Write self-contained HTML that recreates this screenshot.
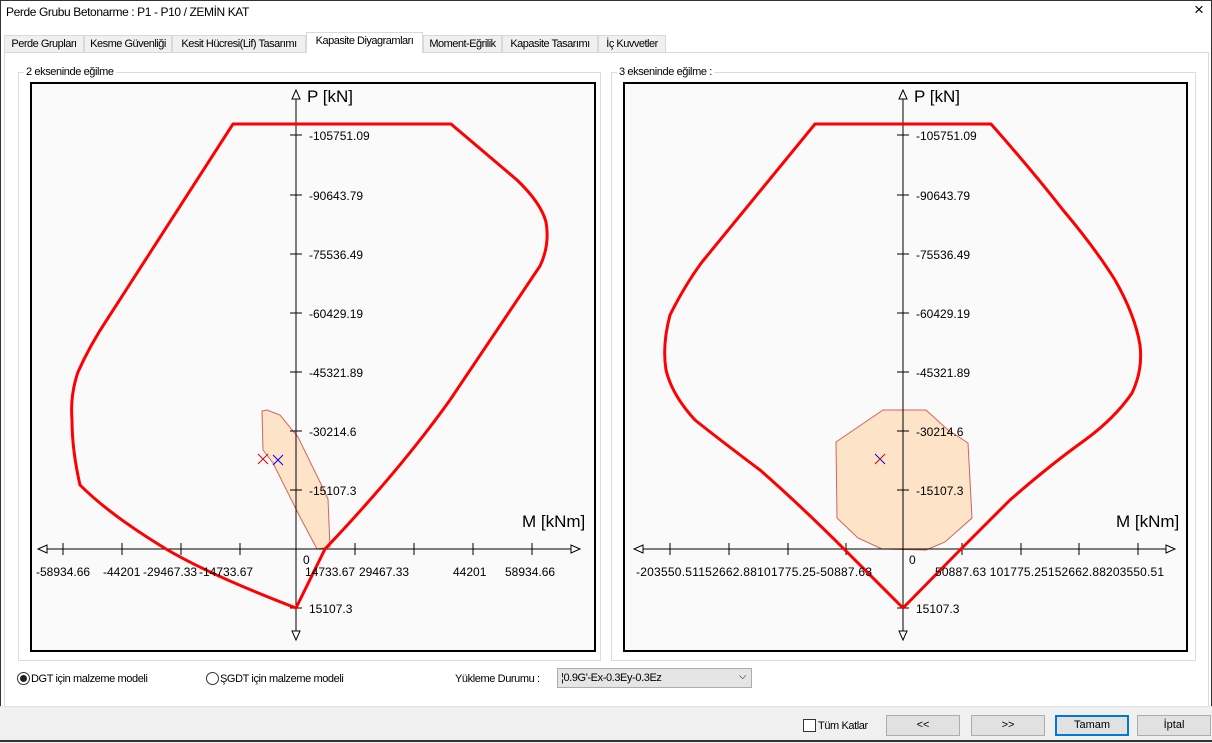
<!DOCTYPE html>
<html><head><meta charset="utf-8"><style>
body{margin:0;width:1212px;height:742px;background:#f0f0f0;font-family:"Liberation Sans",sans-serif;font-size:11px;color:#000;position:relative;overflow:hidden}
.a{position:absolute}
.n{letter-spacing:-0.4px}
.tab{position:absolute;top:35px;height:17px;border:1px solid #d9d9d9;border-bottom:none;background:#f0f0f0;font-size:11px;letter-spacing:-0.5px;line-height:17px;text-align:center;box-sizing:border-box;white-space:nowrap;overflow:hidden}
.btn{position:absolute;top:715px;height:21px;border:1px solid #adadad;background:#e1e1e1;box-sizing:border-box;text-align:center;line-height:19px;font-size:11px}
</style></head><body>
<div class="a" style="left:0;top:0;width:1210px;height:740px;border:1px solid #333;background:#fff"></div>
<div class="a n" style="left:6px;top:5px;font-size:12px">Perde Grubu Betonarme :  P1 - P10 / ZEMİN KAT</div>
<div class="a" style="left:1194px;top:0px;font-size:17px">×</div>
<div class="a" style="left:1px;top:24px;width:1210px;height:680px;background:#fff"></div>
<div class="a" style="left:4px;top:52px;width:1203px;height:653px;border:1px solid #d9d9d9;background:#fff"></div>
<div class="tab" style="left:4px;width:80px">Perde Grupları</div>
<div class="tab" style="left:84px;width:88px">Kesme Güvenliği</div>
<div class="tab" style="left:172px;width:134px">Kesit Hücresi(Lif) Tasarımı</div>
<div class="tab" style="left:306px;top:32px;height:21px;width:117px;background:#fff;border-color:#d9d9d9">Kapasite Diyagramları</div>
<div class="tab" style="left:423px;width:79px">Moment-Eğrilik</div>
<div class="tab" style="left:502px;width:96px">Kapasite Tasarımı</div>
<div class="tab" style="left:598px;width:68px">İç Kuvvetler</div>
<div class="a" style="left:18px;top:72px;width:581px;height:587px;border:1px solid #dcdcdc"></div>
<div class="a n" style="left:24px;top:66px;background:#fff;padding:0 2px">2 ekseninde eğilme</div>
<div class="a" style="left:611px;top:72px;width:583px;height:587px;border:1px solid #dcdcdc"></div>
<div class="a n" style="left:617px;top:66px;background:#fff;padding:0 2px">3 ekseninde eğilme :</div>
<svg class="a" style="left:0;top:0" width="1212" height="742" font-family="Liberation Sans, sans-serif">
<rect x="31" y="83" width="564" height="568" fill="#fafafa" stroke="#000" stroke-width="2"/>
<rect x="624" y="83" width="563" height="568" fill="#fafafa" stroke="#000" stroke-width="2"/>
<g fill="#fde4c8" stroke="#d86060" stroke-width="1">
<polygon points="262,411 267,410 280,415 298,437 320,482 328,499 330,547 317,549 300,517 273,463 263,450"/>
<polygon points="883,410 926,410 948,430 968,443 972,518 945,542 926,550 882,549 858,538 837,518 836,442 858,427"/>
</g>
<g stroke="#000" stroke-width="1" fill="#fff">
<line x1="296" y1="97" x2="296" y2="632"/><line x1="45" y1="549" x2="572" y2="549"/>
<polygon points="296,90 292,99 300,99"/><polygon points="296,640 292,631 300,631"/>
<polygon points="38,549 47,545 47,553"/><polygon points="580,549 571,545 571,553"/>
<line x1="903" y1="97" x2="903" y2="632"/><line x1="641" y1="549" x2="1167" y2="549"/>
<polygon points="903,90 899,99 907,99"/><polygon points="903,640 899,631 907,631"/>
<polygon points="634,549 643,545 643,553"/><polygon points="1175,549 1166,545 1166,553"/>
</g>
<g stroke="#000" stroke-width="1">
<path d="M290 135h12M290 195h12M290 254h12M290 313h12M290 372h12M290 431h12M290 490h12M290 608h12"/>
<path d="M63 543v12M122 543v12M181 543v12M240 543v12M355 543v12M414 543v12M473 543v12M532 543v12"/>
<path d="M897 135h12M897 195h12M897 254h12M897 313h12M897 372h12M897 431h12M897 490h12M897 608h12"/>
<path d="M670 543v12M729 543v12M788 543v12M846 543v12M962 543v12M1021 543v12M1079 543v12M1138 543v12"/>
</g>
<g fill="none" stroke="#f00" stroke-width="3" stroke-linejoin="round">
<path d="M233,124 L451,124 L517,180 Q541,203 546,222 Q550,245 540,266 L450,400 Q400,470 325,549 L296,608 Q210,575 166,549 Q110,515 80,485 Q72,450 72,420 Q70,395 78,372 Q90,345 108,318 Z"/>
<path d="M815,124 L991,124 Q1030,168 1063,210 Q1095,248 1115,280 Q1135,315 1140,345 Q1143,370 1132,393 Q1115,418 1085,440 Q1050,465 1010,500 L960,550 L903,608 L845,550 Q800,505 760,470 Q720,440 695,420 Q672,395 666,370 Q662,345 670,315 Q685,285 702,262 L815,124 Z"/>
</g>
<g stroke-width="1">
<path d="M258 454l10 10M268 454l-10 10" stroke="#d00"/>
<path d="M273 455l10 10M283 455l-10 10" stroke="#00f"/>
<path d="M875 454l10 10" stroke="#00f"/><path d="M885 454l-10 10" stroke="#d00"/>
</g>
<g font-size="12" fill="#000">
<text x="307" y="102" font-size="17">P [kN]</text>
<text x="914" y="102" font-size="17">P [kN]</text>
<text x="522" y="527" font-size="17">M [kNm]</text>
<text x="1116" y="527" font-size="17">M [kNm]</text>
<g>
<text x="309" y="140">-105751.09</text><text x="309" y="200">-90643.79</text><text x="309" y="259">-75536.49</text><text x="309" y="318">-60429.19</text><text x="309" y="377">-45321.89</text><text x="309" y="436">-30214.6</text><text x="309" y="495">-15107.3</text><text x="309" y="613">15107.3</text>
<text x="916" y="140">-105751.09</text><text x="916" y="200">-90643.79</text><text x="916" y="259">-75536.49</text><text x="916" y="318">-60429.19</text><text x="916" y="377">-45321.89</text><text x="916" y="436">-30214.6</text><text x="916" y="495">-15107.3</text><text x="916" y="613">15107.3</text>
</g>
<text x="303" y="564">0</text><text x="909" y="564">0</text>
<text x="36" y="576">-58934.66</text><text x="103" y="576">-44201</text><text x="143" y="576">-29467.33</text><text x="199" y="576">-14733.67</text>
<text x="305" y="576">14733.67</text><text x="359" y="576">29467.33</text><text x="453" y="576">44201</text><text x="505" y="576">58934.66</text>
<text x="636" y="576" textLength="236">-203550.51152662.88101775.25-50887.63</text>
<text x="935" y="576" textLength="229">50887.63 101775.25152662.88203550.51</text>
</g>
</svg>
<div class="a" style="left:17px;top:672px;width:11px;height:11px;border:1px solid #333;border-radius:50%;background:#fff"><div style="margin:2px;width:7px;height:7px;border-radius:50%;background:#222"></div></div>
<div class="a n" style="left:31px;top:673px">DGT için malzeme modeli</div>
<div class="a" style="left:206px;top:672px;width:11px;height:11px;border:1px solid #333;border-radius:50%;background:#fff"></div>
<div class="a n" style="left:220px;top:673px">ŞGDT için malzeme modeli</div>
<div class="a n" style="left:455px;top:673px">Yükleme Durumu :</div>
<div class="a n" style="left:557px;top:668px;width:195px;height:20px;border:1px solid #adadad;background:#e5e5e5;box-sizing:border-box;padding:3px 3px;font-size:11px">¦0.9G'-Ex-0.3Ey-0.3Ez<span style="position:absolute;right:5px;top:2px;font-size:10px">⌵</span></div>
<div class="a" style="left:0;top:706px;width:1212px;height:36px;background:#f0f0f0;border-top:1px solid #e0e0e0"></div>
<div class="a" style="left:803px;top:719px;width:11px;height:11px;border:1px solid #333;background:#fff"></div>
<div class="a n" style="left:818px;top:720px">Tüm Katlar</div>
<div class="btn" style="left:886px;width:74px">&lt;&lt;</div>
<div class="btn" style="left:971px;width:74px">&gt;&gt;</div>
<div class="btn" style="left:1055px;width:74px;border:2px solid #0078d7;line-height:17px">Tamam</div>
<div class="btn" style="left:1137px;width:74px">İptal</div>
<div class="a" style="left:0;top:740px;width:1212px;height:2px;background:#333"></div>
</body></html>
